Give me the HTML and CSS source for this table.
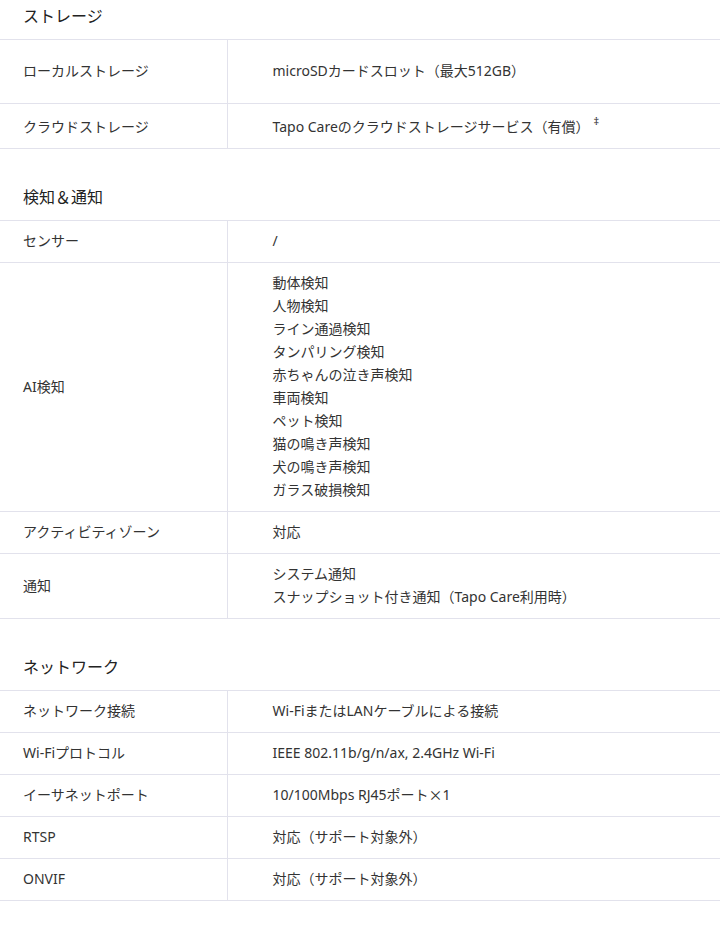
FILE: index.html
```html
<!DOCTYPE html>
<html lang="ja">

<head>
    <meta charset="UTF-8">
    <meta name="viewport" content="width=device-width, initial-scale=1.0">
    <title>仕様 - ストレージ / 検知＆通知 / ネットワーク</title>
    <link rel="stylesheet" href="styles.css">
</head>

<body>
    <!-- ストレージ -->
    <section class="spec-section">
        <h3 class="spec-title">ストレージ</h3>
        <table class="spec-table">
            <tr class="row-tall">
                <th>ローカルストレージ</th>
                <td>microSDカードスロット（最大512GB）</td>
            </tr>
            <tr class="row-note">
                <th>クラウドストレージ</th>
                <td>Tapo Careのクラウドストレージサービス（有償）<sup>‡</sup></td>
            </tr>
        </table>
    </section>

    <!-- 検知＆通知 -->
    <section class="spec-section">
        <h3 class="spec-title">検知＆通知</h3>
        <table class="spec-table">
            <tr>
                <th>センサー</th>
                <td>/</td>
            </tr>
            <tr>
                <th>AI検知</th>
                <td>
                    動体検知<br>
                    人物検知<br>
                    ライン通過検知<br>
                    タンパリング検知<br>
                    赤ちゃんの泣き声検知<br>
                    車両検知<br>
                    ペット検知<br>
                    猫の鳴き声検知<br>
                    犬の鳴き声検知<br>
                    ガラス破損検知
                </td>
            </tr>
            <tr>
                <th>アクティビティゾーン</th>
                <td>対応</td>
            </tr>
            <tr>
                <th>通知</th>
                <td>
                    システム通知<br>
                    スナップショット付き通知（Tapo Care利用時）
                </td>
            </tr>
        </table>
    </section>

    <!-- ネットワーク -->
    <section class="spec-section">
        <h3 class="spec-title">ネットワーク</h3>
        <table class="spec-table">
            <tr>
                <th>ネットワーク接続</th>
                <td>Wi-FiまたはLANケーブルによる接続</td>
            </tr>
            <tr>
                <th>Wi-Fiプロトコル</th>
                <td>IEEE 802.11b/g/n/ax, 2.4GHz Wi-Fi</td>
            </tr>
            <tr>
                <th>イーサネットポート</th>
                <td>10/100Mbps RJ45ポート<span class="cjk">×</span>1</td>
            </tr>
            <tr>
                <th>RTSP</th>
                <td>対応（サポート対象外）</td>
            </tr>
            <tr>
                <th>ONVIF</th>
                <td>対応（サポート対象外）</td>
            </tr>
        </table>
    </section>
</body>

</html>
```

FILE: styles.css
```css
/* Reset */
* {
    margin: 0;
    padding: 0;
    box-sizing: border-box;
}

body {
    font-family: 'Noto Sans', 'Noto Sans CJK JP', sans-serif;
    background-color: #fff;
    color: #333;
    font-size: 14px;
    line-height: 23px;
}

.cjk {
    font-family: 'Noto Sans CJK JP', sans-serif;
}

/* Secções de especificações */
.spec-section {
    margin-bottom: 32px;
}

.spec-title {
    font-size: 16px;
    font-weight: 400;
    color: #222;
    line-height: 23px;
    padding: 5px 23px 11px;
}

/* Tabela */
.spec-table {
    width: 100%;
    border-collapse: collapse;
}

.spec-table th,
.spec-table td {
    text-align: left;
    font-weight: 400;
    vertical-align: middle;
    border-top: 1px solid #e2e2ec;
    border-bottom: 1px solid #e2e2ec;
    padding: 8px 0 10px;
}

.spec-table th {
    width: 227px;
    padding-left: 23px;
    border-right: 1px solid #e2e2ec;
}

.spec-table td {
    padding-left: 45px;
}

.spec-table tr.row-tall th,
.spec-table tr.row-tall td {
    height: 64px;
}

.spec-table tr.row-note th,
.spec-table tr.row-note td {
    height: 45px;
    padding-top: 10px;
    padding-bottom: 10px;
}

sup {
    font-size: 11px;
    line-height: 0;
    margin-left: 4px;
    vertical-align: 7px;
}
```
